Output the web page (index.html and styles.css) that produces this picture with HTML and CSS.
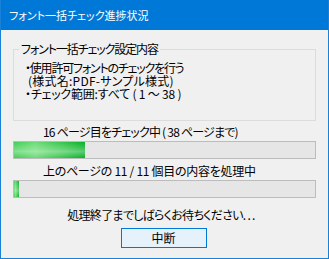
FILE: index.html
```html
<!DOCTYPE html>
<html lang="ja">
<head>
<meta charset="utf-8">
<link rel="stylesheet" href="styles.css">
</head>
<body>
<div class="window">
  <div class="titlebar">フォント一括チェック進捗状況</div>
  <div class="content">
    <fieldset class="group">
      <legend>フォント一括チェック設定内容</legend>
      <div class="group-body">
        <div class="line l1">・使用許可フォントのチェックを行う</div>
        <div class="line l2">&nbsp;(様式名:PDF-サンプル様式)</div>
        <div class="line l3">・チェック範囲:すべて ( 1 ～ 38 )</div>
      </div>
    </fieldset>
    <div class="label first">16 ページ目をチェック中 ( 38 ページまで)</div>
    <div class="bar"><div class="fill" style="width:71px"></div></div>
    <div class="label second">上のページの 11 / 11 個目の内容を処理中</div>
    <div class="bar"><div class="fill" style="width:5px"></div></div>
    <div class="message">処理終了までしばらくお待ちください. . .</div>
    <div class="actions"><button class="btn">中断</button></div>
  </div>
</div>
</body>
</html>
```
FILE: styles.css
```css
html, body {
  margin: 0;
  padding: 0;
  background: #f0f0f0;
}
.window {
  width: 329px;
  height: 259px;
  box-sizing: border-box;
  border: 1px solid #1a7fd6;
  border-top: none;
  background: #f0f0f0;
  font-family: "Noto Sans CJK JP", "Noto Sans", sans-serif;
  font-size: 12px;
  font-feature-settings: "palt";
  color: #000;
  overflow: hidden;
}
.titlebar {
  height: 30px;
  background: #0078d7;
  color: #fff;
  line-height: 30px;
  padding-left: 8px;
  font-size: 11px;
}
.content {
  padding: 0 12px;
}
.group {
  margin: 12px 0 0 0;
  padding: 0;
  border: 1px solid #dcdcdc;
}
.group legend {
  padding: 0 2px;
  margin-left: 5px;
  line-height: 14px;
  letter-spacing: -1.1px;
}
.group-body {
  padding: 5px 0 0 11px;
  height: 59px;
}
.line {
  line-height: 13px;
  white-space: nowrap;
}
.l1 { letter-spacing: -1.2px; }
.l2 { letter-spacing: 0.25px; }
.l3 { letter-spacing: -0.2px; }
.label {
  line-height: 14px;
  padding-left: 30px;
  white-space: nowrap;
}
.label.first {
  margin-top: 4px;
  letter-spacing: -0.8px;
}
.label.second {
  margin-top: 5px;
  letter-spacing: -0.28px;
}
.bar {
  width: 303px;
  height: 18px;
  box-sizing: border-box;
  border: 1px solid #bcbcbc;
  background: #e6e6e6;
  margin-top: 2px;
}
.fill {
  height: 100%;
  background:
    linear-gradient(to bottom, rgba(255,255,255,0) 0%, rgba(255,255,255,0.25) 45%, rgba(255,255,255,0.35) 60%, rgba(255,255,255,0) 100%),
    linear-gradient(to right, #3fcf55 0%, #6ddc77 30%, #35c54a 70%, #06b025 100%);
}
.message {
  margin-top: 10px;
  line-height: 14px;
  text-align: center;
  padding-right: 7px;
  letter-spacing: -0.7px;
}
.actions {
  display: flex;
  justify-content: center;
  margin-top: 6px;
  padding-right: 2px;
}
.btn {
  width: 86px;
  height: 20px;
  box-sizing: border-box;
  border: 1px solid #0078d7;
  background: #e5f1fb;
  font-family: "Noto Sans CJK JP", sans-serif;
  font-size: 12px;
  line-height: 16px;
  padding: 0;
  color: #000;
}
```
